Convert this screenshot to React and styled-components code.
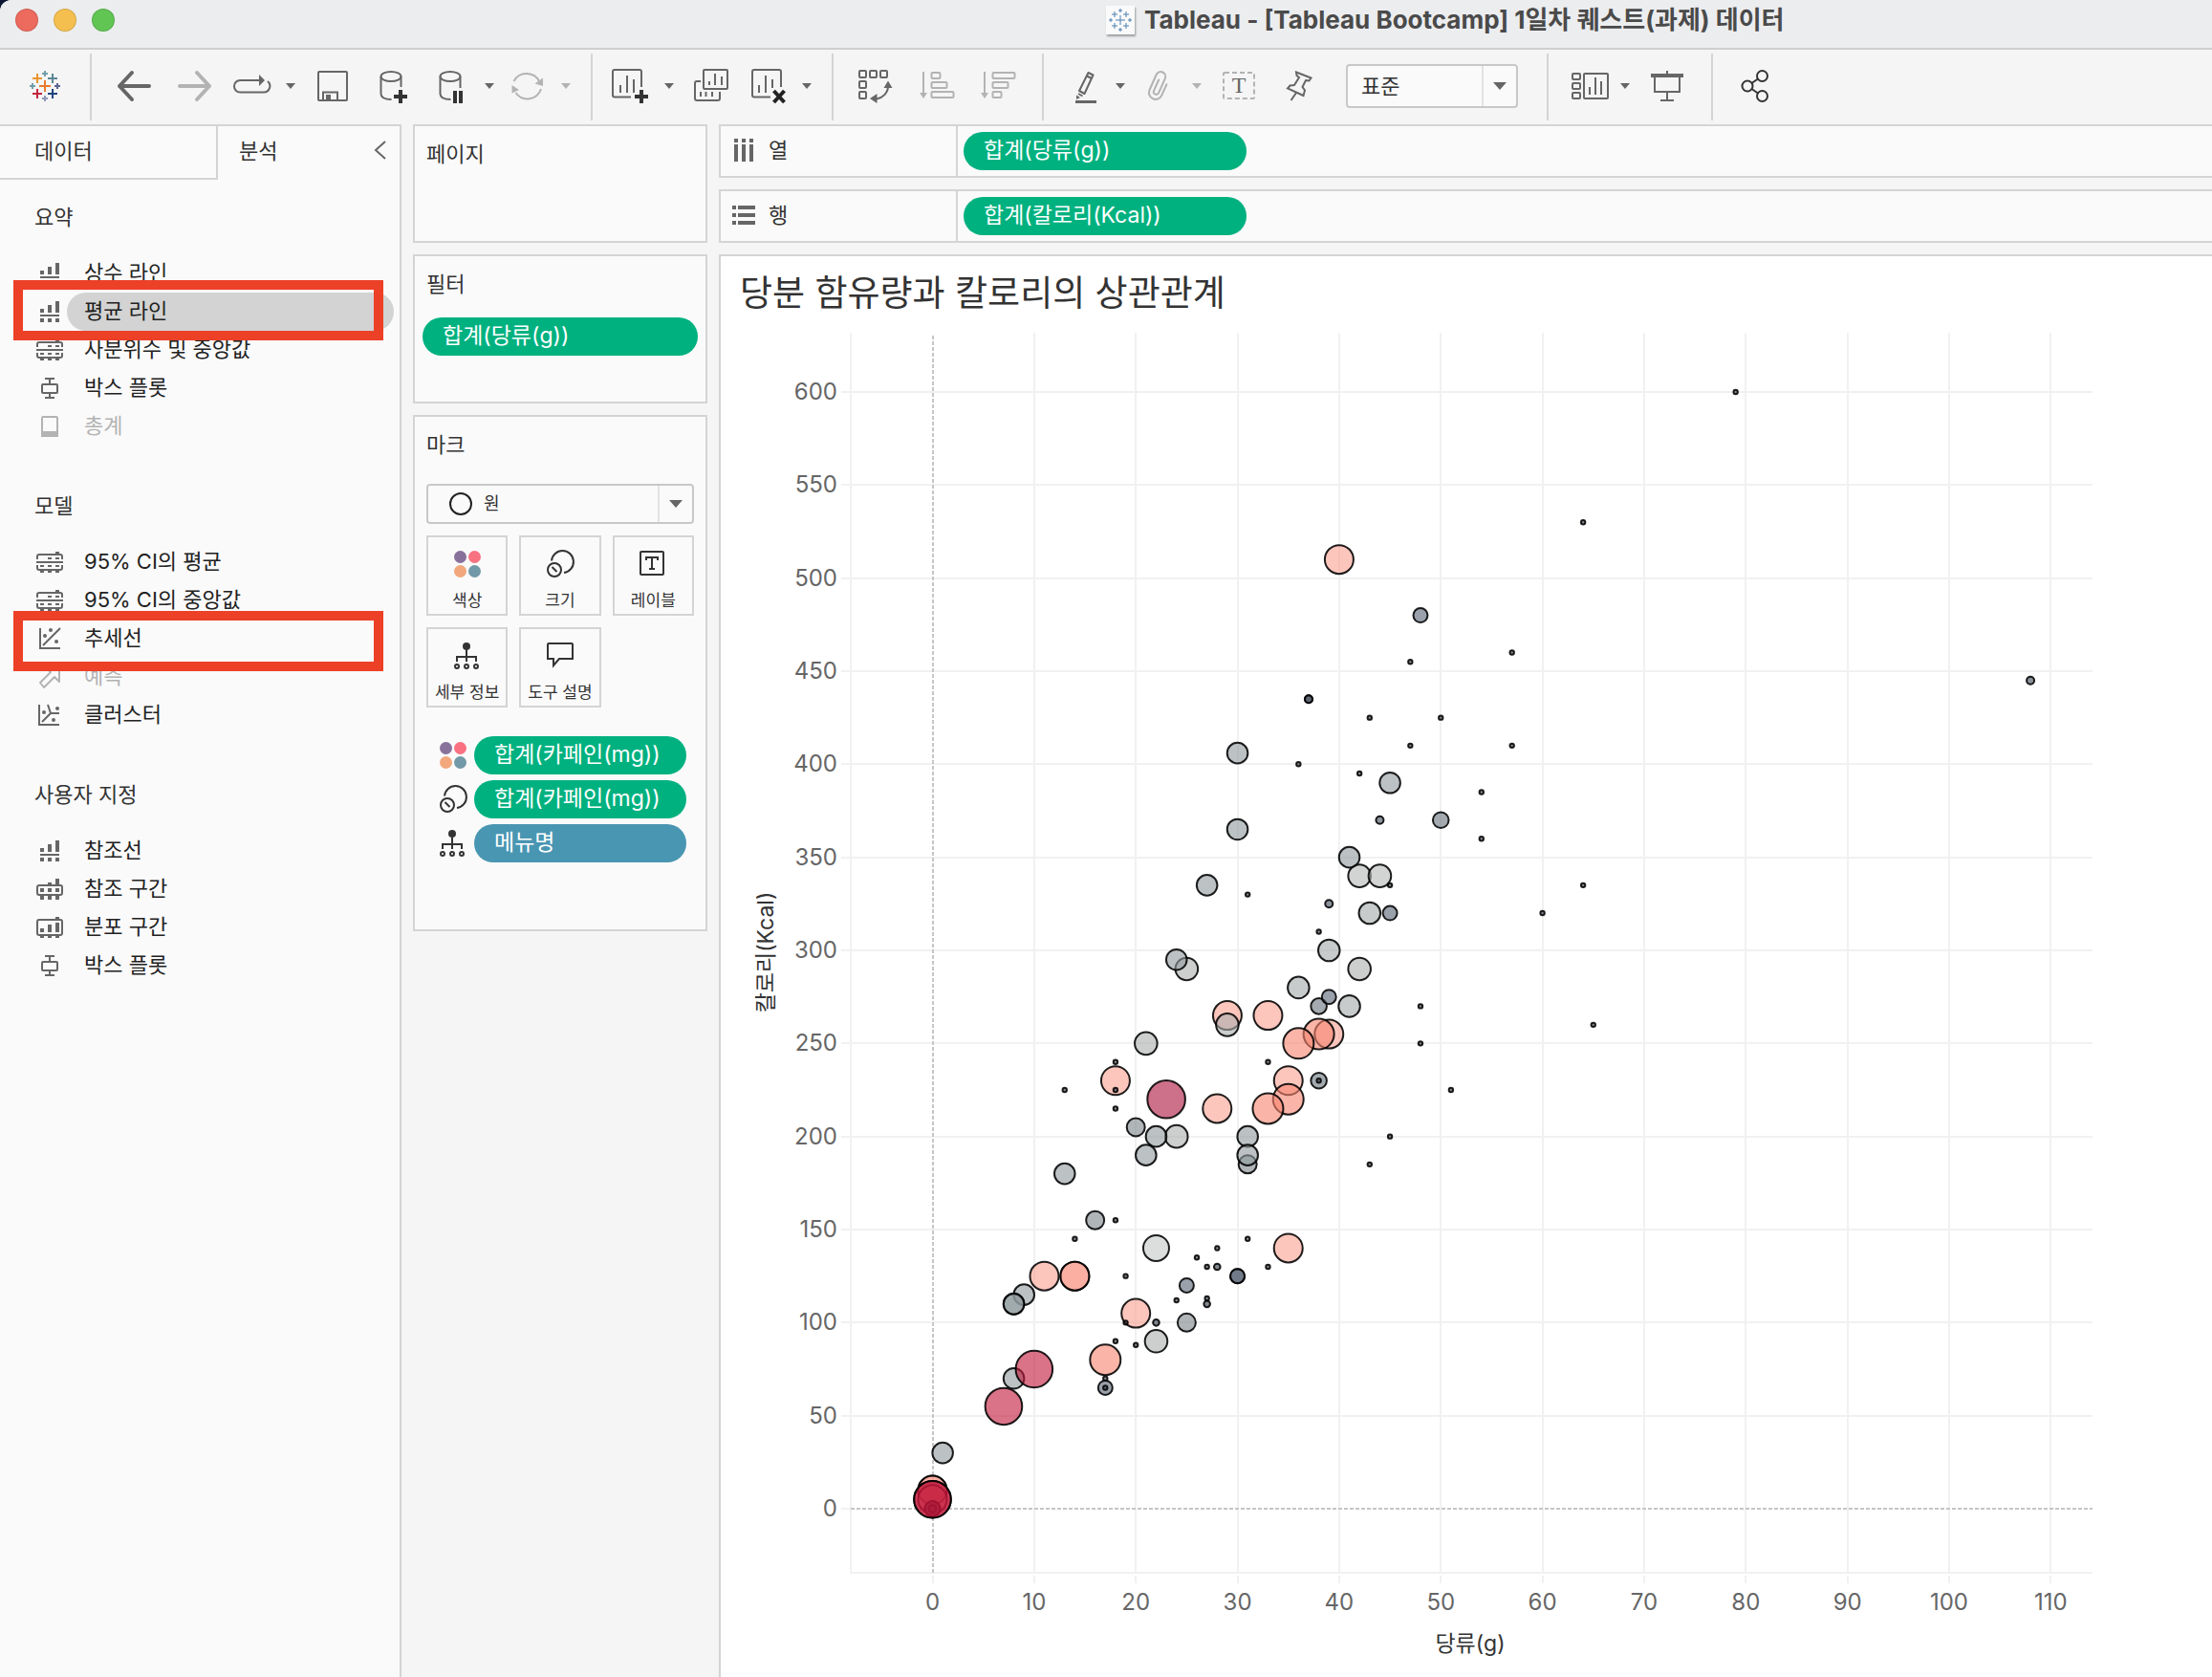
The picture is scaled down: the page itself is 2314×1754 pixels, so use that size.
import React from 'react'
import styled, { createGlobalStyle } from 'styled-components'

const GlobalStyle = createGlobalStyle`
  * {
    box-sizing: border-box;
  }
  body {
    margin: 0;
    background-color: #0d1633;
    font-family: 'Inter', 'Noto Sans CJK KR', sans-serif;
    font-size: 22px;
    line-height: 30px;
    color: #333;
  }
  button, select {
    font: inherit;
    color: inherit;
    margin: 0;
    padding: 0;
    border: 0;
    background: none;
  }
  h1, h2, ul {
    margin: 0;
    padding: 0;
    font-weight: 400;
    list-style: none;
  }
  svg {
    display: block;
    overflow: visible;
    flex: none;
  }
`

/* window frame */
const Window = styled.div`
  display: flex;
  flex-direction: column;
  min-height: 100vh;
  background-color: #f5f5f5;
  border-top-left-radius: 12px;
  overflow: hidden;
`
const TitleBar = styled.header`
  display: grid;
  grid-template-columns: 1fr 1fr;
  align-items: center;
  height: 52px;
  padding-bottom: 8px;
  background-color: #ecedef;
  border-bottom: 2px solid #cfcfd0;
`
const Lights = styled.div`
  display: flex;
  gap: 16px;
  padding-left: 16px;
`
const Light = styled.button`
  width: 24px;
  height: 24px;
  border-radius: 50%;
  border: 1px solid rgba(0, 0, 0, 0.12);
  background-color: ${props => props.$color};
`
const DocTitle = styled.h1`
  display: flex;
  align-items: center;
  gap: 10px;
  font-size: 26px;
  font-weight: 700;
  color: #4a4a4a;
  white-space: nowrap;
`
const DocIcon = styled.span`
  width: 30px;
  height: 30px;
  background-color: #fafafa;
  box-shadow: 1px 2px 2px rgba(0, 0, 0, 0.35);
`

/* toolbar */
const Toolbar = styled.nav`
  display: flex;
  height: 78px;
  padding: 4px 0;
`
const Logo = styled.div`
  display: flex;
  align-items: center;
  justify-content: center;
  width: 94px;
  height: 70px;
  padding-bottom: 2px;
`
const Group = styled.div`
  display: flex;
  align-items: center;
  height: 70px;
  padding: 0 14px 2px 12px;
  border-left: 2px solid #d4d4d4;
`
const Tool = styled.button`
  display: flex;
  align-items: center;
  justify-content: center;
  width: ${props => (props.$split ? 56 : 64)}px;
  height: 60px;
  color: ${props => (props.disabled ? '#b3b3b3' : '#666')};
`
const CaretButton = styled(Tool)`
  width: 24px;
`
const SelectBox = styled.label`
  display: flex;
  align-items: center;
  gap: 12px;
  position: relative;
  width: ${props => props.$width};
  height: ${props => props.$height}px;
  margin: 0 ${props => (props.$toolbar ? 16 : 0)}px;
  padding-left: ${props => (props.$toolbar ? 14 : 22)}px;
  border: 2px solid #c8c8c8;
  border-radius: 4px;
  background-color: #fafafa;
  font-size: ${props => (props.$toolbar ? 22 : 18)}px;
`
const Select = styled.select`
  flex: 1;
  min-width: 0;
  height: 100%;
  appearance: none;
  outline: none;
`
const SelectArrow = styled.span`
  display: flex;
  align-items: center;
  justify-content: center;
  width: 36px;
  height: 100%;
  border-left: 2px solid #e2e2e2;
  color: #666;
  pointer-events: none;
`

/* workspace */
const Workspace = styled.div`
  display: flex;
  flex: 1;
  gap: 12px;
`
const Sidebar = styled.aside`
  width: 420px;
  flex: none;
  background-color: #fafafa;
  border-top: 2px solid #d4d4d4;
  border-right: 2px solid #d4d4d4;
`
const Tabs = styled.div`
  display: flex;
  height: 56px;
`
const Tab = styled.button`
  width: 228px;
  padding: 0 36px 2px;
  text-align: left;
  border-right: 2px solid #d4d4d4;
  border-bottom: 2px solid #d4d4d4;
`
const ActiveTab = styled(Tab)`
  flex: 1;
  padding: 0 0 4px 22px;
  border: 0;
`
const Collapse = styled.button`
  width: 40px;
  padding: 0 14px 6px;
  color: #666;
`
const Section = styled.section`
  margin: 20px 0 44px;
`
const SectionTitle = styled.h2`
  height: 40px;
  margin-bottom: 18px;
  padding: 4px 36px;
  font-size: 22px;
`
const Item = styled.li`
  display: flex;
  align-items: center;
  position: relative;
  height: 40px;
  padding: 0 6px 0 38px;
  color: ${props => (props.$disabled ? '#b3b3b3' : '#666')};
`
const ItemLabel = styled.span`
  flex: 1;
  height: 40px;
  margin-left: 4px;
  padding: 4px 18px;
  border-radius: 20px;
  background-color: ${props => (props.$selected ? '#d3d3d3' : 'transparent')};
  color: ${props => (props.$disabled ? '#b3b3b3' : '#222')};
`
const Highlight = styled.span`
  position: absolute;
  z-index: 1;
  left: 14px;
  right: 17px;
  top: ${props => props.$top}px;
  height: 63px;
  border: 10px solid #ec4027;
`

const Shelves = styled.div`
  display: flex;
  flex-direction: column;
  gap: 12px;
  width: 308px;
  flex: none;
`
const Card = styled.section`
  min-height: ${props => props.$height}px;
  padding: 14px 8px 0;
  border: 2px solid #d4d4d4;
  background-color: #fafafa;
`
const CardTitle = styled.h2`
  padding: 0 4px;
  font-size: 22px;
`
const Pill = styled.button`
  display: block;
  width: ${props => props.$width || '100%'};
  height: 40px;
  padding: 0 21px 2px;
  border-radius: 20px;
  background-color: ${props => props.$color || '#00b180'};
  color: #fff;
  font-size: 23px;
  text-align: left;
  white-space: nowrap;
`
const FilterList = styled.div`
  padding-top: 20px;
`
const MarkControls = styled.div`
  padding: 26px 4px 0;
`
const MarkGrid = styled.div`
  display: grid;
  grid-template-columns: repeat(3, 1fr);
  gap: 12px;
  margin-top: 12px;
`
const MarkButton = styled.button`
  display: flex;
  flex-direction: column;
  align-items: center;
  gap: 12px;
  height: 84px;
  padding-top: 14px;
  border: 2px solid #d4d4d4;
  font-size: 17px;
  line-height: 24px;
  white-space: nowrap;
`
const Encodings = styled.div`
  display: flex;
  flex-direction: column;
  gap: 6px;
  padding: 30px 12px 0 18px;
`
const Encoding = styled.div`
  display: flex;
  align-items: center;
  gap: 8px;
`

const Main = styled.main`
  display: flex;
  flex-direction: column;
  gap: 12px;
  flex: 1;
  min-width: 0;
`
const Shelf = styled.div`
  display: flex;
  height: 56px;
  border: 2px solid #d4d4d4;
  border-right: 0;
  background-color: #fafafa;
`
const ShelfLabel = styled.div`
  display: flex;
  align-items: center;
  gap: 14px;
  width: 248px;
  padding: 0 12px 2px;
  border-right: 2px solid #d4d4d4;
  color: #333;
`
const ShelfDrop = styled.div`
  flex: 1;
  padding: 6px;
`
const View = styled.section`
  flex: 1;
  border: 2px solid #d4d4d4;
  border-right: 0;
  border-bottom: 0;
  background-color: #fff;
`
const ViewTitle = styled.h2`
  height: 78px;
  padding: 12px 20px;
  font-size: 37px;
  line-height: 54px;
`
const Chart = styled.svg`
  width: 100%;
  height: auto;
`
const Tick = styled.text`
  font-size: 24px;
  fill: #666;
`
const AxisTitle = styled.text`
  font-size: 23px;
  fill: #333;
  text-anchor: middle;
`

const plus = (x, y, r) => `M${x - r} ${y}h${r * 2}M${x} ${y - r}v${r * 2}`

function Icon({ children, width = 40, height = 40 }) {
  return (
    <svg width={width} height={height} viewBox={`0 0 ${width} ${height}`} fill="none" stroke="currentColor" strokeWidth="2" aria-hidden="true">
      {children}
    </svg>
  )
}

function Caret({ big }) {
  return (
    <svg width={big ? 14 : 10} height={big ? 8 : 6} viewBox="0 0 10 6" preserveAspectRatio="none" aria-hidden="true">
      <path d="M0 0h10L5 6z" fill="currentColor" />
    </svg>
  )
}

const sheet = <path d="M20 31.500H3a2 2 0 0 1-2-2V5a2 2 0 0 1 2-2h26a2 2 0 0 1 2 2v16" />
const squares = (points, w, h) => points.map(([x, y]) => <rect key={`${x}-${y}`} x={x} y={y} width={w} height={h} rx="1" />)

const toolIcons = {
  back: <path d="M36 20H5M18 6L5 20l13 14" strokeWidth="4" strokeLinecap="round" strokeLinejoin="round" />,
  forward: <path d="M4 20h31M22 6l13 14-13 14" strokeWidth="4" strokeLinecap="round" strokeLinejoin="round" />,
  redo: (
    <>
      <path d="M28 14H7.200a6.200 6.200 0 0 0 0 12.500H32a6.500 6.500 0 0 0 4-11.500" />
      <path d="M27 8l6 6-6 6z" fill="currentColor" stroke="none" />
    </>
  ),
  save: (
    <>
      <rect x="5" y="5" width="30" height="30" rx="1" />
      <path d="M10 35v-8.500h15V35" />
      <rect x="13" y="29" width="5" height="5" fill="currentColor" stroke="none" />
    </>
  ),
  addData: (
    <>
      <ellipse cx="17" cy="10" rx="10.500" ry="5" />
      <path d="M6.500 10v18c0 4 4 6 11 6M27.500 10v11" />
      <path d={plus(27, 31, 7)} stroke="#333" strokeWidth="4" />
    </>
  ),
  pauseData: (
    <>
      <ellipse cx="19" cy="10" rx="10.500" ry="5" />
      <path d="M8.500 10v18c0 4 4 6 11 6M29.500 10v12" />
      <path d="M24 25v13M30 25v13" stroke="#333" strokeWidth="4" />
    </>
  ),
  refresh: (
    <>
      <path d="M5.500 15a15 15 0 0 1 27 1M7.500 27a15 15 0 0 0 26.500-4" />
      <path d="M36 11.500V20l-8.500-2.500zM3.500 27.500V19l7.500 5z" fill="currentColor" stroke="none" />
    </>
  ),
  newSheet: (
    <>
      {sheet}
      <path d="M9 19v8M16 9v18M23 13v14" />
      <path d={plus(31, 31, 7)} stroke="#333" strokeWidth="4" />
    </>
  ),
  duplicate: (
    <>
      <rect x="12" y="3" width="25" height="20" rx="1" />
      <path d="M9 15H5a2 2 0 0 0-2 2v16a2 2 0 0 0 2 2h22a2 2 0 0 0 2-2v-7M18 15v4M24 7v12M31 10v9M9 26v5M14.500 26v5M21 26v5" />
    </>
  ),
  clear: (
    <>
      <g transform="translate(2 0)">{sheet}</g>
      <path d="M10 19v8M17 9v18M24 13v9" />
      <path d="M25.500 25l11 12M36.500 25l-11 12" stroke="#222" strokeWidth="4" />
    </>
  ),
  swap: (
    <>
      {squares([[3, 4], [14, 4], [25, 4], [3, 15], [3, 26]], 7, 7)}
      <path d="M33 20c0 7-5 12-12 13.500" />
      <path d="M33 14.500l4.500 7.500h-9zM14 33l7.500-5v10z" fill="currentColor" stroke="none" />
    </>
  ),
  sortAsc: (
    <>
      <path d="M6 5v24" />
      <path d="M2 27h8l-4 6z" fill="currentColor" stroke="none" />
      <rect x="14.500" y="6" width="9" height="6" rx="1" />
      <rect x="14.500" y="16" width="16" height="6" rx="1" />
      <rect x="14.500" y="26" width="23" height="6" rx="1" />
    </>
  ),
  sortDesc: (
    <>
      <path d="M6 5v24" />
      <path d="M2 27h8l-4 6z" fill="currentColor" stroke="none" />
      <rect x="14.500" y="6" width="23" height="6" rx="1" />
      <rect x="14.500" y="16" width="16" height="6" rx="1" />
      <rect x="14.500" y="26" width="9" height="6" rx="1" />
    </>
  ),
  highlight: (
    <>
      <path d="M26.500 6l5 2.500L22.500 28 17 25zM25 9.500l5 2.500M16 28l4.500 2.500" strokeLinejoin="round" />
      <path d="M14 29.500l4 2.500-4 2z" fill="currentColor" stroke="none" />
      <path d="M13 36.500h22" strokeWidth="3" />
    </>
  ),
  clip: <path transform="rotate(24 20 20)" d="M27 15v12.500a7 7 0 0 1-14 0V10a5 5 0 0 1 10 0v16.500a2.500 2.500 0 0 1-5.500 0V14" strokeLinecap="round" />,
  label: (
    <>
      <rect x="4" y="6" width="32" height="27" rx="1" stroke="#b3b3b3" strokeDasharray="5 3" />
      <text x="20" y="27" textAnchor="middle" fontFamily="Liberation Serif, serif" fontSize="24" fill="currentColor" stroke="none">T</text>
    </>
  ),
  pin: <path d="M16 5.500l15.500 6-2 3-3.500-.5-3.500 7 2.500 3.500-1.500 5.500L7 22.500l2.500-3 4.500-.5 5-8-2.500-2zM16 27l-5.500 8" />,
  showMe: (
    <>
      {squares([[5, 7], [5, 17], [5, 27]], 8, 6)}
      <rect x="17" y="7" width="25" height="26" rx="1" />
      <path d="M23 21v8M29 11v18M35 15v14" />
    </>
  ),
  present: (
    <>
      <path d="M3 9h34" strokeWidth="4" />
      <path d="M20 4v4M7 10v16h26V10M20 26v9M13 35h14" />
    </>
  ),
  share: (
    <g stroke="#333">
      <circle cx="27.500" cy="9.500" r="5.500" />
      <circle cx="12" cy="20" r="5.500" />
      <circle cx="27.500" cy="30.500" r="5.500" />
      <path d="M16.500 17l6.500-4.500M16.500 23l6.500 4.500" />
    </g>
  ),
}

const feet = y => <path d={`M4 ${y}h4M12 ${y}h4M20 ${y}h4`} />
const itemIcons = {
  line: (
    <>
      <path d="M6 8v4M14 4v8M22 0v12M6 18v4M14 18v4M22 18v4" strokeWidth="4" />
      <path d="M4 15h20" />
    </>
  ),
  quartile: (
    <>
      <path d="M1 8V5a2 2 0 0 1 2-2h22a2 2 0 0 1 2 2v3M0 11h28M1 14v3a2 2 0 0 0 2 2h22a2 2 0 0 0 2-2v-3M20 1h4M12 7h4M20 7h4" />
      {feet(15)}
      {feet(21)}
    </>
  ),
  box: <path d="M9 1h10M14 1v6M7 7h14a1 1 0 0 1 1 1v7a1 1 0 0 1-1 1H7a1 1 0 0 1-1-1V8a1 1 0 0 1 1-1zM14 16v5M9 21h10" />,
  total: (
    <>
      <rect x="6" y="1" width="16" height="20" rx="1" />
      <path d="M6 17h16v4H6z" fill="currentColor" />
    </>
  ),
  trend: (
    <>
      <path d="M4 0v21h21M7 18L25 0" />
      <g fill="currentColor" stroke="none">
        <circle cx="9" cy="8" r="2" />
        <circle cx="15" cy="2" r="2" />
        <circle cx="21" cy="14" r="2" />
      </g>
    </>
  ),
  forecast: <path d="M10 2h14v14l-5-5L8 22l-4-5L15 6z" strokeLinejoin="round" />,
  cluster: (
    <>
      <path d="M3 0v21h21M12 0l3 9h9M15 9l-9 9" />
      <g fill="currentColor" stroke="none">
        <circle cx="8" cy="8" r="2" />
        <circle cx="22" cy="4" r="2" />
        <circle cx="18" cy="16" r="2" />
      </g>
    </>
  ),
  band: (
    <>
      <rect x="1" y="7" width="26" height="10" rx="2" />
      <path d="M22 0v6M14 4v2M6 10v4M14 10v4M22 10v4M6 18v4M14 18v4M22 18v4" strokeWidth="4" />
    </>
  ),
  distribution: (
    <>
      <rect x="1" y="3" width="26" height="16" rx="2" />
      <path d="M6 12v4M14 8v8M22 6v10" strokeWidth="4" />
      <path d="M20 1h4" />
      {feet(21)}
    </>
  ),
}

const markIcons = {
  color: (
    <g stroke="none">
      <circle cx="6.500" cy="6.500" r="6.500" fill="#88719a" />
      <circle cx="21.500" cy="6.500" r="6.500" fill="#f87282" />
      <circle cx="6.500" cy="21.500" r="6.500" fill="#f2a77c" />
      <circle cx="21.500" cy="21.500" r="6.500" fill="#7299a7" />
    </g>
  ),
  size: (
    <>
      <path d="M5 10.500a11.500 11.500 0 1 1 13 12.500" />
      <circle cx="8" cy="20" r="7" />
      <path d="M5.500 17l5 5" />
    </>
  ),
  label: (
    <>
      <rect x="1" y="1" width="24" height="24" rx="1" />
      <path d="M7 10V7h12v3M13 7v12M10 19h6" />
    </>
  ),
  detail: (
    <>
      <circle cx="13" cy="4" r="4" fill="currentColor" stroke="none" />
      <path d="M13 8v12M3 20v-5h20v5" />
      <circle cx="3" cy="25" r="2" />
      <circle cx="13" cy="25" r="2" />
      <circle cx="23" cy="25" r="2" />
    </>
  ),
  tooltip: <path d="M2 1h24a1 1 0 0 1 1 1v15H13l-6 7v-7H1V2a1 1 0 0 1 1-1z" />,
}

const logoMarks = [
  [20, 20, 6, '#ea7a2d'], [12, 12, 5, '#e8952f'], [28, 12, 5, '#5b8795'], [12, 28, 5, '#c42540'], [28, 28, 5, '#1f447e'],
  [20, 7, 3, '#739eab'], [7, 20, 3, '#739eab'], [33, 20, 3, '#5c6692'], [20, 33, 3, '#8e98b8'],
]

const toolGroups = [
  [
    { icon: 'back', label: '뒤로' },
    { icon: 'forward', label: '앞으로', disabled: true },
    { icon: 'redo', label: '재생', split: true },
    { icon: 'save', label: '저장' },
    { icon: 'addData', label: '새 데이터 원본' },
    { icon: 'pauseData', label: '자동 업데이트 일시 중지', split: true },
    { icon: 'refresh', label: '업데이트 실행', split: true, disabled: true },
  ],
  [
    { icon: 'newSheet', label: '새 워크시트', split: true },
    { icon: 'duplicate', label: '복제' },
    { icon: 'clear', label: '시트 지우기', split: true },
  ],
  [
    { icon: 'swap', label: '행과 열 바꾸기' },
    { icon: 'sortAsc', label: '오름차순 정렬', disabled: true },
    { icon: 'sortDesc', label: '내림차순 정렬', disabled: true },
  ],
  [
    { icon: 'highlight', label: '하이라이트', split: true },
    { icon: 'clip', label: '멤버 그룹화', split: true, disabled: true },
    { icon: 'label', label: '마크 레이블 표시' },
    { icon: 'pin', label: '축 고정' },
  ],
  [
    { icon: 'showMe', label: '표현 방식', split: true },
    { icon: 'present', label: '프레젠테이션 모드' },
  ],
  [{ icon: 'share', label: '공유' }],
]

const sections = [
  {
    title: '요약',
    items: [
      { icon: 'line', label: '상수 라인' },
      { icon: 'line', label: '평균 라인', selected: true, highlight: -13 },
      { icon: 'quartile', label: '사분위수 및 중앙값' },
      { icon: 'box', label: '박스 플롯' },
      { icon: 'total', label: '총계', disabled: true },
    ],
  },
  {
    title: '모델',
    items: [
      { icon: 'quartile', label: '95% CI의 평균' },
      { icon: 'quartile', label: '95% CI의 중앙값' },
      { icon: 'trend', label: '추세선', highlight: -9 },
      { icon: 'forecast', label: '예측', disabled: true },
      { icon: 'cluster', label: '클러스터' },
    ],
  },
  {
    title: '사용자 지정',
    items: [
      { icon: 'line', label: '참조선' },
      { icon: 'band', label: '참조 구간' },
      { icon: 'distribution', label: '분포 구간' },
      { icon: 'box', label: '박스 플롯' },
    ],
  },
]

const marks = [
  { icon: 'color', label: '색상' },
  { icon: 'size', label: '크기' },
  { icon: 'label', label: '레이블' },
  { icon: 'detail', label: '세부 정보' },
  { icon: 'tooltip', label: '도구 설명' },
]

const encodings = [
  { icon: 'color', label: '합계(카페인(mg))' },
  { icon: 'size', label: '합계(카페인(mg))' },
  { icon: 'detail', label: '메뉴명', color: '#4996b2' },
]

/* caffeine level -> radius, fill, and the [sugar, kcal] of each drink, in drawing order */
const series = [
  { r: 13.5, fill: '#c4c8c6', points: [[22, 140]] },
  { r: 11.8, fill: '#b4b7b5', points: [[42, 340], [44, 340]] },
  { r: 15, fill: '#faa091', points: [[40, 510], [29, 265], [33, 265], [39, 255], [18, 230], [35, 230], [28, 215], [35, 140], [11, 125], [14, 125], [14, 125], [20, 105], [0, 10], [0, 10], [0, 5]] },
  { r: 11.8, fill: '#aaafad', points: [[25, 290], [42, 290], [29, 260], [21, 250], [24, 200], [22, 90]] },
  { r: 11.3, fill: '#a2a8a8', points: [[36, 280], [39, 300], [43, 320], [41, 270]] },
  { r: 9.5, fill: '#7b8589', points: [[16, 155], [20, 205], [31, 185], [25, 100]] },
  { r: 10.8, fill: '#8f999d', points: [[30, 406], [30, 365], [27, 335], [41, 350], [24, 295], [45, 390], [22, 200], [21, 190], [31, 200], [31, 190], [13, 180], [9, 115], [8, 110], [8, 110], [8, 70], [1, 30]] },
  { r: 16, fill: '#f7846e', points: [[38, 255], [36, 250], [35, 220], [33, 215], [17, 80]] },
  { r: 8, fill: '#3a4250', points: [[0, 0], [0, 0]] },
  { r: 3.8, fill: '#3a4250', points: [[0, 0]] },
  { r: 19.3, fill: '#c11639', points: [[10, 75], [7, 55], [0, 5], [0, 5]] },
  { r: 19.8, fill: '#ac113a', points: [[23, 220]] },
  { r: 8.3, fill: '#66737b', points: [[50, 370], [38, 270], [38, 230]] },
  { r: 7.5, fill: '#576273', points: [[48, 480], [45, 320], [39, 275], [25, 120], [30, 125], [30, 125], [17, 65]] },
  { r: 4, fill: '#3f4a58', points: [[44, 370], [39, 325], [108, 445], [37, 435], [37, 435]] },
  { r: 3.3, fill: '#2f3846', points: [[28, 130], [27, 110], [22, 100]] },
  {
    r: 2.2,
    fill: '#333b47',
    points: [
      [79, 600], [64, 530], [57, 460], [47, 455], [43, 425], [50, 425], [47, 410], [57, 410], [36, 400], [42, 395],
      [54, 385], [54, 360], [64, 335], [60, 320], [31, 330], [45, 335], [38, 310], [48, 270], [48, 250], [65, 260],
      [51, 225], [45, 200], [43, 185], [33, 240], [18, 240], [13, 225], [18, 225], [18, 215], [18, 155], [14, 145],
      [31, 145], [28, 140], [26, 135], [27, 130], [33, 130], [19, 125], [24, 112], [27, 113], [19, 100], [18, 90],
      [20, 88], [17, 70], [17, 65], [38, 230],
    ],
  },
]

const sx = v => 221.5 + v * 10.635
const sy = v => 1232 - v * 1.9467
const xTicks = [0, 10, 20, 30, 40, 50, 60, 70, 80, 90, 100, 110]
const yTicks = [0, 50, 100, 150, 200, 250, 300, 350, 400, 450, 500, 550, 600]

function ScatterPlot() {
  return (
    <Chart viewBox="0 0 1560 1400" role="img" aria-label="당분 함유량과 칼로리의 상관관계">
      <g stroke="#f1f1f1" strokeWidth="2">
        {xTicks.slice(1).map(t => <line key={t} x1={Math.round(sx(t))} x2={Math.round(sx(t))} y1="2" y2="1299" />)}
        {yTicks.slice(1).map(t => <line key={t} x1="136" x2="1435" y1={Math.round(sy(t))} y2={Math.round(sy(t))} />)}
        {xTicks.map(t => <line key={t} x1={Math.round(sx(t))} x2={Math.round(sx(t))} y1="1302" y2="1310" />)}
        {yTicks.map(t => <line key={t} x1="126" x2="135" y1={Math.round(sy(t))} y2={Math.round(sy(t))} />)}
        <path d="M136 2v1297h1299" fill="none" />
      </g>
      <path d="M222 5v1294M136 1232h1299" stroke="#c6c6c6" strokeWidth="2" strokeDasharray="4 2" />
      <g stroke="#000" strokeOpacity="0.88" strokeWidth="2" fillOpacity="0.6">
        {series.map(s => s.points.map(([x, y], i) => (
          <circle key={`${s.fill}-${s.r}-${i}`} cx={sx(x)} cy={sy(y)} r={s.r} fill={s.fill} />
        )))}
      </g>
      {yTicks.map(t => <Tick key={t} x="122" y={sy(t) + 8} textAnchor="end">{t}</Tick>)}
      {xTicks.map(t => <Tick key={t} x={sx(t)} y="1338" textAnchor="middle">{t}</Tick>)}
      <AxisTitle x="784" y="1381">당류(g)</AxisTitle>
      <AxisTitle transform="translate(55 650) rotate(-90)">칼로리(Kcal)</AxisTitle>
    </Chart>
  )
}

function ToolGroup({ tools, children }) {
  return (
    <Group>
      {tools.map(tool => (
        <React.Fragment key={tool.icon}>
          <Tool $split={tool.split} disabled={tool.disabled} aria-label={tool.label}>
            <Icon>{toolIcons[tool.icon]}</Icon>
          </Tool>
          {tool.split && (
            <CaretButton disabled={tool.disabled} aria-label={`${tool.label} 메뉴`}>
              <Caret />
            </CaretButton>
          )}
        </React.Fragment>
      ))}
      {children}
    </Group>
  )
}

function App() {
  return (
    <Window>
      <GlobalStyle />
      <TitleBar>
        <Lights>
          <Light $color="#ec6a5e" aria-label="닫기" />
          <Light $color="#f4bf4f" aria-label="최소화" />
          <Light $color="#61c554" aria-label="확대" />
        </Lights>
        <DocTitle>
          <DocIcon>
            <Icon width={30} height={30}>
              <path
                d={[plus(15, 15, 5), plus(9, 9, 3), plus(21, 9, 3), plus(9, 21, 3), plus(21, 21, 3), plus(15, 5, 2), plus(15, 25, 2), plus(5, 15, 2), plus(25, 15, 2)].join('')}
                stroke="#4a80b4"
                strokeWidth="1"
              />
            </Icon>
          </DocIcon>
          Tableau - [Tableau Bootcamp] 1일차 퀘스트(과제) 데이터
        </DocTitle>
      </TitleBar>

      <Toolbar>
        <Logo>
          <Icon>
            {logoMarks.map(([x, y, r, color]) => <path key={`${x}-${y}`} d={plus(x, y, r)} stroke={color} />)}
          </Icon>
        </Logo>
        {toolGroups.map((tools, i) => (
          <ToolGroup key={tools[0].icon} tools={tools}>
            {i === 3 && (
              <SelectBox $toolbar $width="180px" $height={46}>
                <Select aria-label="맞춤">
                  <option>표준</option>
                </Select>
                <SelectArrow><Caret big /></SelectArrow>
              </SelectBox>
            )}
          </ToolGroup>
        ))}
      </Toolbar>

      <Workspace>
        <Sidebar>
          <Tabs>
            <Tab>데이터</Tab>
            <ActiveTab>분석</ActiveTab>
            <Collapse aria-label="접기">
              <Icon width={12} height={20}>
                <path d="M11 1L1 10l10 9" />
              </Icon>
            </Collapse>
          </Tabs>
          {sections.map(section => (
            <Section key={section.title}>
              <SectionTitle>{section.title}</SectionTitle>
              <ul>
                {section.items.map(item => (
                  <Item key={item.label} $disabled={item.disabled}>
                    <Icon width={28} height={22}>{itemIcons[item.icon]}</Icon>
                    <ItemLabel $selected={item.selected} $disabled={item.disabled}>{item.label}</ItemLabel>
                    {item.highlight && <Highlight $top={item.highlight} />}
                  </Item>
                ))}
              </ul>
            </Section>
          ))}
        </Sidebar>

        <Shelves>
          <Card $height={124}>
            <CardTitle>페이지</CardTitle>
          </Card>
          <Card $height={156}>
            <CardTitle>필터</CardTitle>
            <FilterList>
              <Pill>합계(당류(g))</Pill>
            </FilterList>
          </Card>
          <Card $height={540}>
            <CardTitle>마크</CardTitle>
            <MarkControls>
              <SelectBox $width="100%" $height={42}>
                <Icon width={24} height={24}>
                  <circle cx="12" cy="12" r="11" stroke="#222" />
                </Icon>
                <Select aria-label="마크 유형">
                  <option>원</option>
                </Select>
                <SelectArrow><Caret big /></SelectArrow>
              </SelectBox>
              <MarkGrid>
                {marks.map(mark => (
                  <MarkButton key={mark.icon}>
                    <Icon width={28} height={28}>{markIcons[mark.icon]}</Icon>
                    {mark.label}
                  </MarkButton>
                ))}
              </MarkGrid>
            </MarkControls>
            <Encodings>
              {encodings.map(item => (
                <Encoding key={item.icon}>
                  <Icon width={28} height={28}>{markIcons[item.icon]}</Icon>
                  <Pill $color={item.color}>{item.label}</Pill>
                </Encoding>
              ))}
            </Encodings>
          </Card>
        </Shelves>

        <Main>
          <Shelf>
            <ShelfLabel>
              <Icon width={24} height={24}>
                <path d="M4 0v4M12 0v4M20 0v4M4 6v18M12 6v18M20 6v18" strokeWidth="4" stroke="#666" />
              </Icon>
              열
            </ShelfLabel>
            <ShelfDrop>
              <Pill $width="296px">합계(당류(g))</Pill>
            </ShelfDrop>
          </Shelf>
          <Shelf>
            <ShelfLabel>
              <Icon width={24} height={24}>
                <path d="M0 4h4M6 4h18M0 12h4M6 12h18M0 20h4M6 20h18" strokeWidth="4" stroke="#666" />
              </Icon>
              행
            </ShelfLabel>
            <ShelfDrop>
              <Pill $width="296px">합계(칼로리(Kcal))</Pill>
            </ShelfDrop>
          </Shelf>
          <View>
            <ViewTitle>당분 함유량과 칼로리의 상관관계</ViewTitle>
            <ScatterPlot />
          </View>
        </Main>
      </Workspace>
    </Window>
  )
}

export default App
